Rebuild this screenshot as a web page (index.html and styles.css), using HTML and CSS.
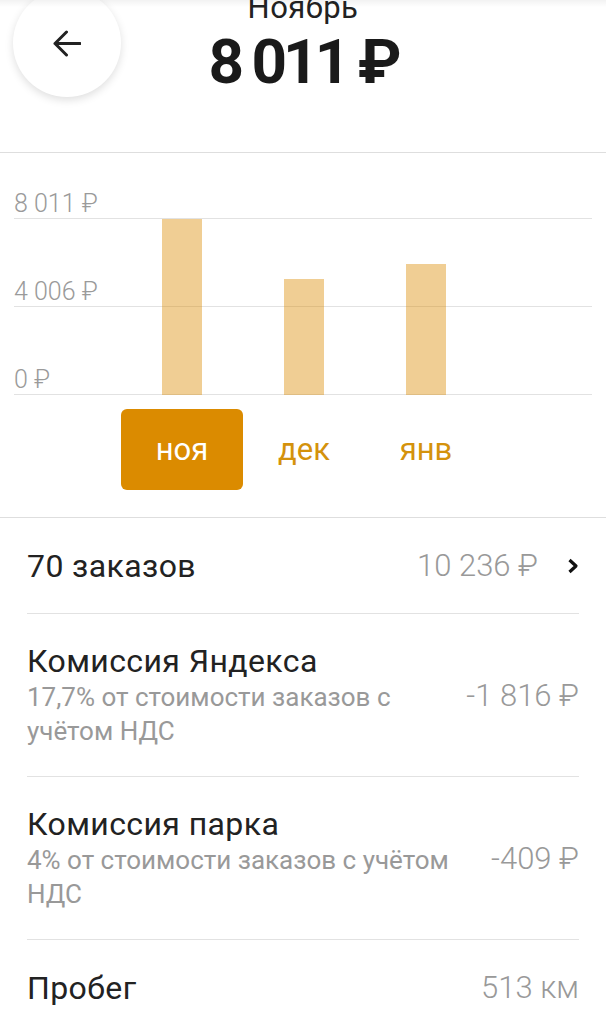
FILE: index.html
```html
<!DOCTYPE html>
<html lang="ru">
<head>
    <meta charset="UTF-8">
    <meta name="viewport" content="width=device-width, initial-scale=1.0">
    <title>Ноябрь - доход</title>
    <link rel="stylesheet" href="styles.css">
</head>
<body>
    <div class="top-fade"></div>

    <header class="header">
        <button class="back-btn" aria-label="Назад">
            <svg width="28" height="27" viewBox="0 0 28 27">
                <path d="M27 13.5H2M13.5 2L2 13.5L13.5 25" fill="none" stroke="#222" stroke-width="3" stroke-linecap="round" stroke-linejoin="round"/>
            </svg>
        </button>
        <div class="month-title">Ноябрь</div>
        <div class="total">8 011 ₽</div>
    </header>

    <section class="chart">
        <div class="plot">
            <div class="bars">
                <div class="bar-col"><div class="bar" style="height: 100%"></div></div>
                <div class="bar-col"><div class="bar" style="height: 65.7%"></div></div>
                <div class="bar-col"><div class="bar" style="height: 74.3%"></div></div>
            </div>
            <div class="grid-row first"><span class="grid-label">8 011 ₽</span></div>
            <div class="grid-row"><span class="grid-label">4 006 ₽</span></div>
            <div class="grid-row"><span class="grid-label">0 ₽</span></div>
        </div>
        <div class="months">
            <div class="month active">ноя</div>
            <div class="month">дек</div>
            <div class="month">янв</div>
        </div>
    </section>

    <section class="list">
        <div class="row">
            <div class="row-main">
                <div class="row-title">70 заказов</div>
            </div>
            <div class="row-value">10 236 ₽</div>
            <svg class="chevron" width="12" height="16" viewBox="0 0 12 16">
                <path d="M2.5 2L9 8L2.5 14" fill="none" stroke="#111" stroke-width="3.2" stroke-linejoin="round"/>
            </svg>
        </div>
        <div class="row tall">
            <div class="row-main">
                <div class="row-title">Комиссия Яндекса</div>
                <div class="row-sub">17,7% от стоимости заказов с учётом НДС</div>
            </div>
            <div class="row-value">-1 816 ₽</div>
        </div>
        <div class="row tall">
            <div class="row-main">
                <div class="row-title">Комиссия парка</div>
                <div class="row-sub">4% от стоимости заказов с учётом НДС</div>
            </div>
            <div class="row-value">-409 ₽</div>
        </div>
        <div class="row last">
            <div class="row-main">
                <div class="row-title">Пробег</div>
            </div>
            <div class="row-value">513 км</div>
        </div>
    </section>
</body>
</html>
```

FILE: styles.css
```css
body {
    margin: 0;
    font-family: Roboto, "Noto Sans", Arial, sans-serif;
    color: #222;
    background: #fff;
    overflow: hidden;
}
.top-fade {
    position: absolute;
    top: 0;
    left: 0;
    right: 0;
    height: 7px;
    background: linear-gradient(rgba(0,0,0,0.05), rgba(0,0,0,0));
    z-index: 5;
}
.header {
    position: relative;
    height: 152px;
    border-bottom: 1px solid #dedede;
    display: flex;
    flex-direction: column;
    align-items: center;
}
.back-btn {
    position: absolute;
    left: 13px;
    top: -11px;
    width: 108px;
    height: 108px;
    border: none;
    border-radius: 50%;
    background: #fff;
    box-shadow: 0 3px 9px rgba(0,0,0,0.13);
    display: flex;
    align-items: center;
    justify-content: center;
    padding: 0;
}
.month-title {
    margin-top: -7px;
    font-size: 31px;
    line-height: 30px;
    letter-spacing: 0.5px;
}
.total {
    margin-top: 8px;
    font-size: 62px;
    line-height: 62px;
    font-weight: 700;
    letter-spacing: -4px;
    color: #1a1a1a;
}
.chart {
    padding: 37px 14px 27px;
    border-bottom: 1px solid #dedede;
}
.plot {
    position: relative;
}
.bars {
    position: absolute;
    top: 29px;
    bottom: 0;
    left: 107px;
    display: flex;
}
.bar-col {
    width: 122px;
    display: flex;
    align-items: flex-end;
    justify-content: center;
}
.bar {
    width: 40px;
    background: rgba(219,139,0,0.42);
}
.grid-row {
    height: 87px;
    border-bottom: 1px solid #e2e2e2;
    display: flex;
    align-items: flex-end;
}
.grid-row.first {
    height: 28px;
}
.grid-label {
    font-size: 25px;
    line-height: 28px;
    font-weight: 300;
    color: #9a9a9a;
}
.months {
    display: flex;
    margin: 14px 0 0 107px;
}
.month {
    width: 122px;
    height: 81px;
    border-radius: 6px;
    display: flex;
    align-items: center;
    justify-content: center;
    font-size: 31px;
    color: #d4920c;
}
.month.active {
    background: #db8b00;
    color: #fff;
}
.list {
    padding: 0 27px;
}
.row {
    display: flex;
    align-items: center;
    height: 95px;
    border-bottom: 1px solid #e2e2e2;
}
.row.tall {
    height: 162px;
}
.row.last {
    border-bottom: none;
}
.row-main {
    flex: 1;
    padding-right: 32px;
}
.row-title {
    font-size: 32px;
    line-height: 38px;
    letter-spacing: 0.4px;
}
.row-sub {
    font-size: 26px;
    line-height: 34px;
    color: #999;
}
.row-value {
    font-size: 31px;
    font-weight: 300;
    color: #999;
    white-space: nowrap;
}
.chevron {
    margin-left: 29px;
}
```
